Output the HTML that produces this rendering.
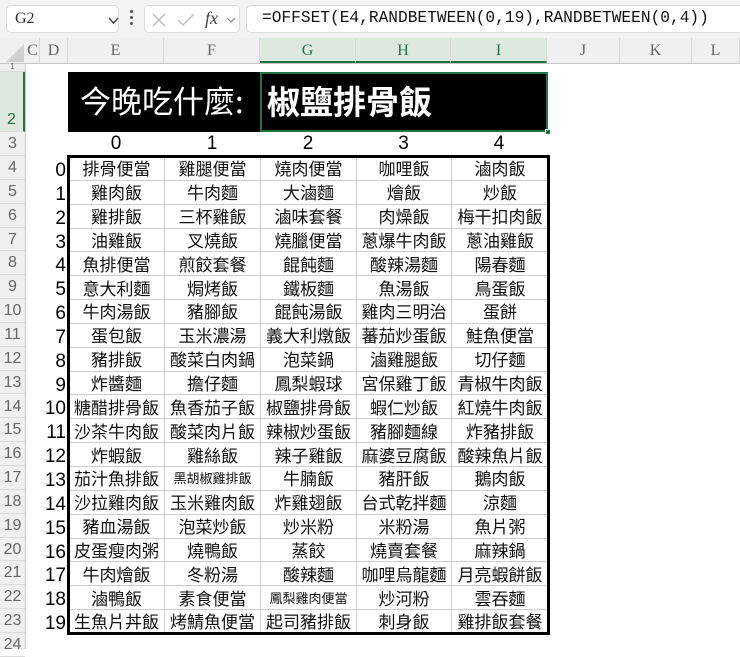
<!DOCTYPE html>
<html><head><meta charset="utf-8">
<style>
*{margin:0;padding:0;box-sizing:border-box}
body{width:740px;height:649px;overflow:hidden;background:#fff;position:relative;font-family:"Liberation Sans","Noto Sans CJK TC",sans-serif}
.abs{position:absolute}
#bar{left:0;top:0;width:740px;height:38px;background:#f3f3f3}
.box{position:absolute;background:#fff;border:1px solid #dcdcdc;border-radius:5px}
#colh{left:0;top:38px;width:740px;height:26px;background:#f0f0f0;border-bottom:1px solid #c8c8c8}
.ch{position:absolute;top:0;height:25px;line-height:25px;text-align:center;font-family:"Liberation Serif",serif;font-size:16px;color:#666;border-right:1px solid #d8d8d8}
.ch.sel{background:#dde8df;color:#217346;border-bottom:2px solid #217346}
#rowh{left:0;top:64px;width:26px;height:585px;background:#f0f0f0;border-right:1px solid #c8c8c8}
.rh{position:absolute;left:0;width:25px;text-align:center;font-family:"Liberation Sans",sans-serif;font-size:16px;color:#666;border-bottom:1px solid #dadada}
table{border-collapse:collapse;table-layout:fixed}
#data td{height:23.85px;border:1px solid #cdcdcd;text-align:center;font-size:17px;line-height:20px;padding:0;white-space:nowrap;overflow:hidden;font-family:"Noto Sans CJK TC",sans-serif;color:#111}
#data td.s{font-size:13px}
</style></head><body>
<div id="bar" class="abs">
  <div class="box" style="left:6px;top:5px;width:113px;height:28px"><span style="position:absolute;left:8px;top:4px;font-family:'Liberation Serif',serif;font-size:16px;color:#333">G2</span>
  <svg style="position:absolute;left:101px;top:11px" width="11" height="8"><path d="M1 1 L5.5 6 L10 1" fill="none" stroke="#444" stroke-width="1.5"/></svg></div>
  <div class="abs" style="left:130px;top:10px;width:3px;height:18px"><div style="width:3px;height:3px;background:#555;margin-bottom:3px;border-radius:2px"></div><div style="width:3px;height:3px;background:#555;margin-bottom:3px;border-radius:2px"></div><div style="width:3px;height:3px;background:#555;border-radius:2px"></div></div>
  <div class="box" style="left:144px;top:5px;width:96px;height:28px">
   <svg style="position:absolute;left:6px;top:6px" width="16" height="16"><path d="M2 2 L14 14 M14 2 L2 14" stroke="#bbb" stroke-width="1.3"/></svg>
   <svg style="position:absolute;left:32px;top:6px" width="18" height="16"><path d="M1 8 L6 13 L17 2" fill="none" stroke="#bbb" stroke-width="1.3"/></svg>
   <span style="position:absolute;left:60px;top:2px;font-family:'Liberation Serif',serif;font-style:italic;font-size:18px;color:#444">fx</span>
   <svg style="position:absolute;left:81px;top:11px" width="10" height="7"><path d="M1 1 L5 5 L9 1" fill="none" stroke="#888" stroke-width="1.2"/></svg>
  </div>
  <div class="box" style="left:246px;top:5px;width:500px;height:28px"><span style="position:absolute;left:15px;top:3px;font-family:'Liberation Mono',monospace;font-size:16.2px;color:#111;white-space:nowrap">=OFFSET(E4,RANDBETWEEN(0,19),RANDBETWEEN(0,4))</span></div>
</div>
<div id="colh" class="abs">
  <svg style="position:absolute;left:6px;top:6px" width="18" height="18"><path d="M18 0 L18 18 L0 18 Z" fill="#d0d0d0"/></svg>
  <div class="ch" style="left:26px;width:14px">C</div>
  <div class="ch" style="left:40px;width:28px">D</div>
  <div class="ch" style="left:68px;width:96px">E</div>
  <div class="ch" style="left:164px;width:96px">F</div>
  <div class="ch sel" style="left:260px;width:96px">G</div>
  <div class="ch sel" style="left:356px;width:95px">H</div>
  <div class="ch sel" style="left:451px;width:96px">I</div>
  <div class="ch" style="left:547px;width:73px">J</div>
  <div class="ch" style="left:620px;width:72px">K</div>
  <div class="ch" style="left:692px;width:48px">L</div>
</div>
<div id="rowh" class="abs">
  <div class="rh" style="top:0;height:8px;font-size:8px;line-height:6px">1</div>
  <div class="rh" style="top:8px;height:60px;line-height:96px;color:#217346;background:#dde8df;border-right:2px solid #217346">2</div>
  <div class="rh" style="top:68px;height:24px;line-height:24px">3</div>
  <div class="rh" style="top:92px;height:23.85px;line-height:24px">4</div>
  <div class="rh" style="top:115.85px;height:23.85px;line-height:24px">5</div>
  <div class="rh" style="top:139.7px;height:23.85px;line-height:24px">6</div>
  <div class="rh" style="top:163.55px;height:23.85px;line-height:24px">7</div>
  <div class="rh" style="top:187.4px;height:23.85px;line-height:24px">8</div>
  <div class="rh" style="top:211.25px;height:23.85px;line-height:24px">9</div>
  <div class="rh" style="top:235.1px;height:23.85px;line-height:24px">10</div>
  <div class="rh" style="top:258.95px;height:23.85px;line-height:24px">11</div>
  <div class="rh" style="top:282.8px;height:23.85px;line-height:24px">12</div>
  <div class="rh" style="top:306.65px;height:23.85px;line-height:24px">13</div>
  <div class="rh" style="top:330.5px;height:23.85px;line-height:24px">14</div>
  <div class="rh" style="top:354.35px;height:23.85px;line-height:24px">15</div>
  <div class="rh" style="top:378.2px;height:23.85px;line-height:24px">16</div>
  <div class="rh" style="top:402.05px;height:23.85px;line-height:24px">17</div>
  <div class="rh" style="top:425.9px;height:23.85px;line-height:24px">18</div>
  <div class="rh" style="top:449.75px;height:23.85px;line-height:24px">19</div>
  <div class="rh" style="top:473.6px;height:23.85px;line-height:24px">20</div>
  <div class="rh" style="top:497.45px;height:23.85px;line-height:24px">21</div>
  <div class="rh" style="top:521.3px;height:23.85px;line-height:24px">22</div>
  <div class="rh" style="top:545.15px;height:23.85px;line-height:24px">23</div>
  <div class="rh" style="top:569px;height:23.85px;line-height:24px">24</div>
</div>
<div class="abs" style="left:68px;top:72px;width:480px;height:60px;background:#000"></div>
<div class="abs" style="left:80px;top:77px;font-family:'Noto Sans CJK TC',sans-serif;font-size:31px;line-height:46px;color:#fff;white-space:nowrap">今晚吃什麼:</div>
<div class="abs" style="left:260px;top:72px;width:288px;height:60px;border:2px solid #217346"></div>
<div class="abs" style="left:545px;top:129px;width:6px;height:6px;background:#217346;border:1px solid #fff"></div>
<div class="abs" style="left:267px;top:77px;font-family:'Noto Sans CJK TC',sans-serif;font-weight:bold;font-size:33px;line-height:46px;color:#fff;white-space:nowrap">椒鹽排骨飯</div>
<div class="abs" style="left:68px;top:132px;width:480px;height:24px;display:flex;font-size:19px;line-height:24px">
<div style="width:96px;text-align:center">0</div><div style="width:96px;text-align:center">1</div><div style="width:96px;text-align:center">2</div><div style="width:95px;text-align:center">3</div><div style="width:96px;text-align:center">4</div></div>
<div class="abs" style="left:30px;top:159px;width:36px;font-size:19px;text-align:right;line-height:23.85px">0<br>1<br>2<br>3<br>4<br>5<br>6<br>7<br>8<br>9<br>10<br>11<br>12<br>13<br>14<br>15<br>16<br>17<br>18<br>19</div>
<table id="data" class="abs" style="left:68px;top:156px;width:480px">
<colgroup><col style="width:96px"><col style="width:96px"><col style="width:96px"><col style="width:95px"><col style="width:97px"></colgroup>
<tr><td>排骨便當</td><td>雞腿便當</td><td>燒肉便當</td><td>咖哩飯</td><td>滷肉飯</td></tr>
<tr><td>雞肉飯</td><td>牛肉麵</td><td>大滷麵</td><td>燴飯</td><td>炒飯</td></tr>
<tr><td>雞排飯</td><td>三杯雞飯</td><td>滷味套餐</td><td>肉燥飯</td><td>梅干扣肉飯</td></tr>
<tr><td>油雞飯</td><td>叉燒飯</td><td>燒臘便當</td><td>蔥爆牛肉飯</td><td>蔥油雞飯</td></tr>
<tr><td>魚排便當</td><td>煎餃套餐</td><td>餛飩麵</td><td>酸辣湯麵</td><td>陽春麵</td></tr>
<tr><td>意大利麵</td><td>焗烤飯</td><td>鐵板麵</td><td>魚湯飯</td><td>鳥蛋飯</td></tr>
<tr><td>牛肉湯飯</td><td>豬腳飯</td><td>餛飩湯飯</td><td>雞肉三明治</td><td>蛋餅</td></tr>
<tr><td>蛋包飯</td><td>玉米濃湯</td><td>義大利燉飯</td><td>蕃茄炒蛋飯</td><td>鮭魚便當</td></tr>
<tr><td>豬排飯</td><td>酸菜白肉鍋</td><td>泡菜鍋</td><td>滷雞腿飯</td><td>切仔麵</td></tr>
<tr><td>炸醬麵</td><td>擔仔麵</td><td>鳳梨蝦球</td><td>宮保雞丁飯</td><td>青椒牛肉飯</td></tr>
<tr><td>糖醋排骨飯</td><td>魚香茄子飯</td><td>椒鹽排骨飯</td><td>蝦仁炒飯</td><td>紅燒牛肉飯</td></tr>
<tr><td>沙茶牛肉飯</td><td>酸菜肉片飯</td><td>辣椒炒蛋飯</td><td>豬腳麵線</td><td>炸豬排飯</td></tr>
<tr><td>炸蝦飯</td><td>雞絲飯</td><td>辣子雞飯</td><td>麻婆豆腐飯</td><td>酸辣魚片飯</td></tr>
<tr><td>茄汁魚排飯</td><td class="s">黑胡椒雞排飯</td><td>牛腩飯</td><td>豬肝飯</td><td>鵝肉飯</td></tr>
<tr><td>沙拉雞肉飯</td><td>玉米雞肉飯</td><td>炸雞翅飯</td><td>台式乾拌麵</td><td>涼麵</td></tr>
<tr><td>豬血湯飯</td><td>泡菜炒飯</td><td>炒米粉</td><td>米粉湯</td><td>魚片粥</td></tr>
<tr><td>皮蛋瘦肉粥</td><td>燒鴨飯</td><td>蒸餃</td><td>燒賣套餐</td><td>麻辣鍋</td></tr>
<tr><td>牛肉燴飯</td><td>冬粉湯</td><td>酸辣麵</td><td>咖哩烏龍麵</td><td>月亮蝦餅飯</td></tr>
<tr><td>滷鴨飯</td><td>素食便當</td><td class="s">鳳梨雞肉便當</td><td>炒河粉</td><td>雲吞麵</td></tr>
<tr><td>生魚片丼飯</td><td>烤鯖魚便當</td><td>起司豬排飯</td><td>刺身飯</td><td>雞排飯套餐</td></tr>
</table>
<div class="abs" style="left:67px;top:155px;width:483px;height:480px;border:3px solid #000"></div>
</body></html>
